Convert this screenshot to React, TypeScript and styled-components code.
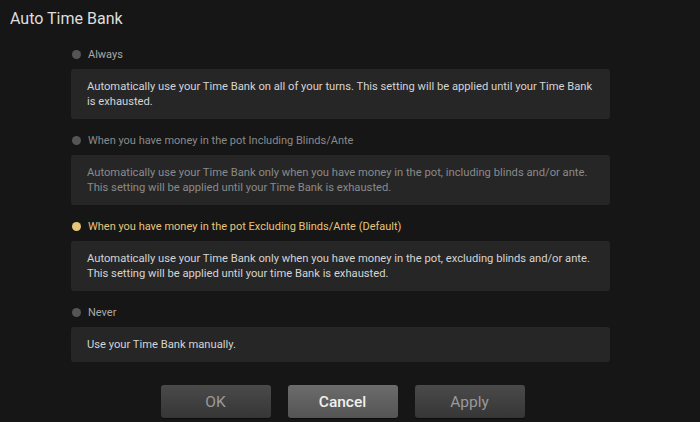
import React from "react";
import styled, { createGlobalStyle } from "styled-components";

const Global = createGlobalStyle`
  html, body { margin: 0; padding: 0; background: #161616; }
  body { font-family: Roboto, "Liberation Sans", sans-serif; }
`;

const Page = styled.div`
  width: 700px;
  height: 422px;
  background: #161616;
  overflow: hidden;
  display: flex;
  flex-direction: column;
`;

const Title = styled.h1`
  margin: 9px 0 0 10px;
  font-size: 16px;
  line-height: 20px;
  font-weight: 400;
  color: #dedede;
`;

const Options = styled.div`
  margin: 15px 0 0 71px;
  width: 539px;
  display: flex;
  flex-direction: column;
`;

const Option = styled.div`
  display: flex;
  flex-direction: column;
  gap: 5px;
  & + & { margin-top: 11px; }
`;

const Label = styled.div<{ $tone: "normal" | "dim" | "active" }>`
  display: flex;
  align-items: center;
  gap: 7px;
  height: 20px;
  font-size: 11px;
  white-space: nowrap;
  color: ${(p) => (p.$tone === "active" ? "#e6c47a" : p.$tone === "dim" ? "#8a8a8a" : "#a8a8a8")};
`;

const Dot = styled.span<{ $active?: boolean }>`
  width: 9px;
  height: 9px;
  border-radius: 50%;
  margin-left: 1px;
  background: ${(p) => (p.$active ? "#e6c47a" : "#555")};
`;

const Desc = styled.div<{ $dim?: boolean; $single?: boolean }>`
  background: #262626;
  border-radius: 3px;
  padding: 10px 12px 10px 16px;
  font-size: 11.2px;
  line-height: 15px;
  color: ${(p) => (p.$dim ? "#8a8a8a" : "#d4d4d4")};
  box-sizing: border-box;
  height: ${(p) => (p.$single ? "35px" : "50px")};
`;

const Line = styled.span`
  display: block;
  white-space: nowrap;
`;

const Buttons = styled.div`
  margin-top: 23px;
  display: flex;
  justify-content: center;
  gap: 17px;
  padding-right: 15px;
`;

const Button = styled.button<{ $primary?: boolean }>`
  width: 110px;
  height: 33px;
  border: none;
  border-radius: 3px;
  font-family: Roboto, "Liberation Sans", sans-serif;
  font-size: 15.5px;
  font-weight: ${(p) => (p.$primary ? 500 : 400)};
  color: ${(p) => (p.$primary ? "#f0f0f0" : "#9a9a9a")};
  background: ${(p) =>
    p.$primary
      ? "linear-gradient(#6c6c6c, #545454)"
      : "linear-gradient(#4a4a4a, #363636)"};
  box-shadow: 0 1px 0 #0c0c0c;
  padding: 0;
`;

const options = [
  {
    label: "Always",
    tone: "normal" as const,
    lines: [
      "Automatically use your Time Bank on all of your turns. This setting will be applied until your Time Bank",
      "is exhausted.",
    ],
  },
  {
    label: "When you have money in the pot Including Blinds/Ante",
    tone: "dim" as const,
    lines: [
      "Automatically use your Time Bank only when you have money in the pot, including blinds and/or ante.",
      "This setting will be applied until your Time Bank is exhausted.",
    ],
  },
  {
    label: "When you have money in the pot Excluding Blinds/Ante (Default)",
    tone: "active" as const,
    lines: [
      "Automatically use your Time Bank only when you have money in the pot, excluding blinds and/or ante.",
      "This setting will be applied until your time Bank is exhausted.",
    ],
  },
  {
    label: "Never",
    tone: "normal" as const,
    lines: ["Use your Time Bank manually."],
    single: true,
  },
];

export default function App() {
  return (
    <Page>
      <Global />
      <Title>Auto Time Bank</Title>
      <Options>
        {options.map((o) => (
          <Option key={o.label}>
            <Label $tone={o.tone}>
              <Dot $active={o.tone === "active"} />
              {o.label}
            </Label>
            <Desc $dim={o.tone === "dim"} $single={o.single}>
              {o.lines.map((l) => (
                <Line key={l}>{l}</Line>
              ))}
            </Desc>
          </Option>
        ))}
      </Options>
      <Buttons>
        <Button>OK</Button>
        <Button $primary>Cancel</Button>
        <Button>Apply</Button>
      </Buttons>
    </Page>
  );
}
